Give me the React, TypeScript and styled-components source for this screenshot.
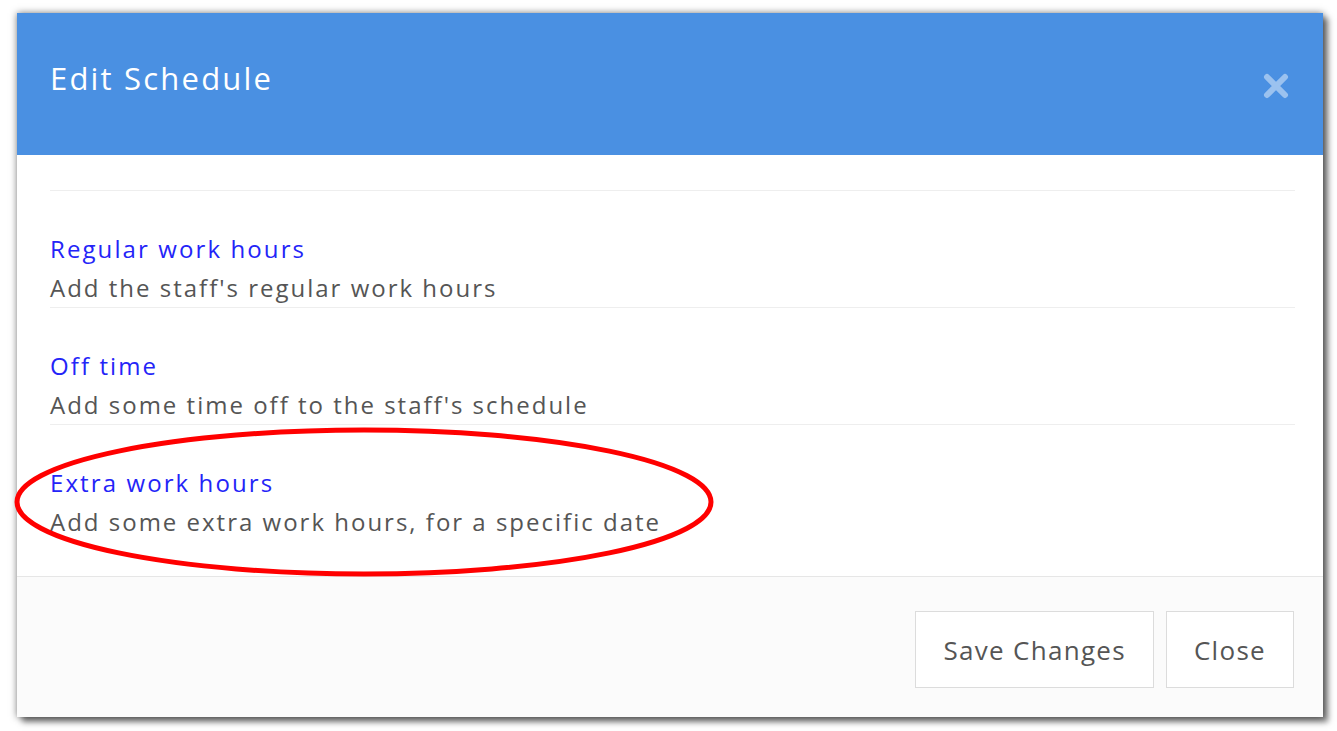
import styled, { createGlobalStyle } from 'styled-components'

const GlobalStyle = createGlobalStyle`
  html, body {
    margin: 0;
    padding: 0;
    background: #ffffff;
  }
  body {
    font-family: "Open Sans", "Noto Sans", sans-serif;
  }
`

const Page = styled.div`
  position: relative;
  width: 1337px;
  height: 731px;
  padding: 13px 0 0 17px;
  box-sizing: border-box;
  overflow: hidden;
`

const Modal = styled.div`
  width: 1306px;
  height: 704px;
  display: flex;
  flex-direction: column;
  background: #fff;
  box-shadow: 5px 5px 6px rgba(0, 0, 0, 0.5), 0 0 7px rgba(0, 0, 0, 0.5);
`

const Header = styled.header`
  height: 142px;
  flex-shrink: 0;
  display: flex;
  align-items: center;
  justify-content: space-between;
  padding: 0 33px;
  background: #4a90e2;
`

const Title = styled.h1`
  margin: 0 0 12px;
  font-size: 31px;
  font-weight: 400;
  color: #fff;
  letter-spacing: 2.2px;
`

const CloseX = styled.button`
  border: 0;
  background: none;
  padding: 0;
  margin: 4px 0 0;
  width: 28px;
  height: 28px;
  cursor: pointer;
  display: flex;
`

const Body = styled.div`
  flex: 1;
  padding: 35px 28px 0 33px;
`

const List = styled.ul`
  list-style: none;
  margin: 0;
  padding: 0;
  border-top: 1px solid #eeeeee;
`

const Item = styled.li<{ $last?: boolean }>`
  padding-top: 38px;
  border-bottom: ${({ $last }) => ($last ? 'none' : '1px solid #eeeeee')};
`

const ItemLink = styled.a`
  display: block;
  font-size: 24px;
  line-height: 39px;
  letter-spacing: 2.1px;
  color: #2424f8;
  text-decoration: none;
`

const ItemText = styled.div`
  font-size: 24px;
  line-height: 39px;
  letter-spacing: 2px;
  color: #555;
`

const Footer = styled.footer`
  height: 141px;
  flex-shrink: 0;
  box-sizing: border-box;
  display: flex;
  justify-content: flex-end;
  align-items: flex-start;
  gap: 12px;
  padding: 34px 29px 0 0;
  background: #fbfbfb;
  border-top: 1px solid #e6e6e6;
`

const Button = styled.button`
  height: 77px;
  padding: 0 27px;
  border: 1px solid #dcdcdc;
  background: #fff;
  font-family: "Open Sans", "Noto Sans", sans-serif;
  font-size: 26px;
  letter-spacing: 1.3px;
  color: #555;
  cursor: pointer;
`

const Annotation = styled.svg`
  position: absolute;
  left: 0;
  top: 0;
  pointer-events: none;
`

const items = [
  { title: 'Regular work hours', text: "Add the staff's regular work hours" },
  { title: 'Off time', text: "Add some time off to the staff's schedule" },
  { title: 'Extra work hours', text: 'Add some extra work hours, for a specific date' },
]

export default function App() {
  return (
    <Page>
      <GlobalStyle />
      <Modal>
        <Header>
          <Title>Edit Schedule</Title>
          <CloseX aria-label="Close">
            <svg width="28" height="28" viewBox="0 0 28 28">
              <path
                d="M5 5 L23 23 M23 5 L5 23"
                stroke="rgba(255,255,255,0.45)"
                strokeWidth="6"
                strokeLinecap="round"
              />
            </svg>
          </CloseX>
        </Header>
        <Body>
          <List>
            {items.map((it, i) => (
              <Item key={it.title} $last={i === items.length - 1}>
                <ItemLink href="#">{it.title}</ItemLink>
                <ItemText>{it.text}</ItemText>
              </Item>
            ))}
          </List>
        </Body>
        <Footer>
          <Button>Save Changes</Button>
          <Button>Close</Button>
        </Footer>
      </Modal>
      <Annotation width="1337" height="731">
        <ellipse cx="364" cy="502" rx="347" ry="72" fill="none" stroke="#ff0000" strokeWidth="5" />
      </Annotation>
    </Page>
  )
}
